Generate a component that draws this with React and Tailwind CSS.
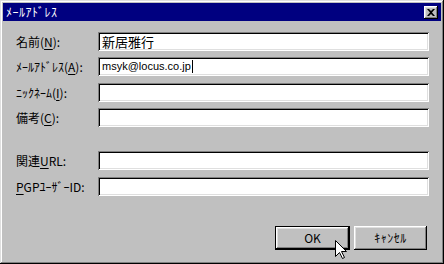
import React from 'react';

const font = { fontFamily: '"Noto Sans CJK JP", "Liberation Sans", sans-serif' };

const raised =
  'shadow-[inset_-1px_-1px_#000,inset_1px_1px_#fff,inset_-2px_-2px_#808080,inset_2px_2px_#dfdfdf]';
const sunken =
  'shadow-[inset_1px_1px_#808080,inset_-1px_-1px_#fff,inset_2px_2px_#000,inset_-2px_-2px_#dfdfdf]';

const Label = ({ pre, hot, post }) => (
  <div className="w-[95px] shrink-0 pl-[13px] text-[12px] leading-none text-black whitespace-nowrap">
    {pre}
    {hot && <u className="underline-offset-2">{hot}</u>}
    {post}
  </div>
);

const Field = ({ mt, label, children }) => (
  <div className={`flex items-center ${mt}`}>
    {label}
    <div className={`w-[331px] h-[19px] shrink-0 bg-white ${sunken} flex items-center pl-[4px]`}>
      {children}
    </div>
  </div>
);

export default function App() {
  return (
    <div
      className="relative w-[444px] h-[264px] bg-[#c0c0c0] shadow-[inset_-1px_-1px_#000,inset_1px_1px_#dfdfdf,inset_-2px_-2px_#808080,inset_2px_2px_#fff] p-[3px] flex flex-col"
      style={font}
    >
      <div className="h-[18px] bg-[#000080] flex items-center justify-between pl-[3px] pr-[3px]">
        <span className="text-white text-[12px] leading-none tracking-[0.5px]">ﾒｰﾙｱﾄﾞﾚｽ</span>
        <div className={`w-[14px] h-[13px] bg-[#c0c0c0] ${raised} flex items-center justify-center`}>
          <svg width="8" height="7" viewBox="0 0 8 7">
            <path d="M0 0h2l2 2 2-2h2L5 3.5 8 7H6L4 5 2 7H0l3-3.5z" fill="#000" />
          </svg>
        </div>
      </div>

      <div className="flex flex-col">
        <Field mt="mt-[11px]" label={<Label pre="名前(" hot="N" post="):" />}>
          <span className="text-[13px] leading-none text-black">新居雅行</span>
        </Field>
        <Field mt="mt-[6px]" label={<Label pre="ﾒｰﾙｱﾄﾞﾚｽ(" hot="A" post="):" />}>
          <span
            className="text-[11px] leading-none text-black"
            style={{ fontFamily: '"Liberation Sans", sans-serif' }}
          >
            msyk@locus.co.jp
          </span>
          <span className="w-px h-[13px] bg-black ml-px" />
        </Field>
        <Field mt="mt-[7px]" label={<Label pre="ﾆｯｸﾈｰﾑ(" hot="I" post="):" />} />
        <Field mt="mt-[6px]" label={<Label pre="備考(" hot="C" post="):" />} />
        <Field mt="mt-[24px]" label={<Label pre="関連" hot="U" post="RL:" />} />
        <Field mt="mt-[7px]" label={<Label pre="" hot="P" post="GPﾕｰｻﾞｰID:" />} />
      </div>

      <div className="flex justify-end gap-[4px] mt-[30px] pr-[14px]">
        <div className="w-[75px] h-[24px] border border-black">
          <div className={`w-full h-full bg-[#c0c0c0] ${raised} flex items-center justify-center text-[12px] leading-none text-black`}>
            OK
          </div>
        </div>
        <div className={`w-[73px] h-[24px] bg-[#c0c0c0] ${raised} flex items-center justify-center text-[12px] leading-none text-black tracking-[0.5px]`}>
          ｷｬﾝｾﾙ
        </div>
      </div>

      <svg className="absolute left-[335px] top-[240px]" width="13" height="20" viewBox="0 0 13 20">
        <path
          d="M0.5 0.5 L0.5 16.5 L4.5 12.5 L7.5 18.5 L9.5 17.5 L6.5 11.5 L11.5 11.5 Z"
          fill="#fff"
          stroke="#000"
          strokeWidth="1"
        />
      </svg>
    </div>
  );
}
